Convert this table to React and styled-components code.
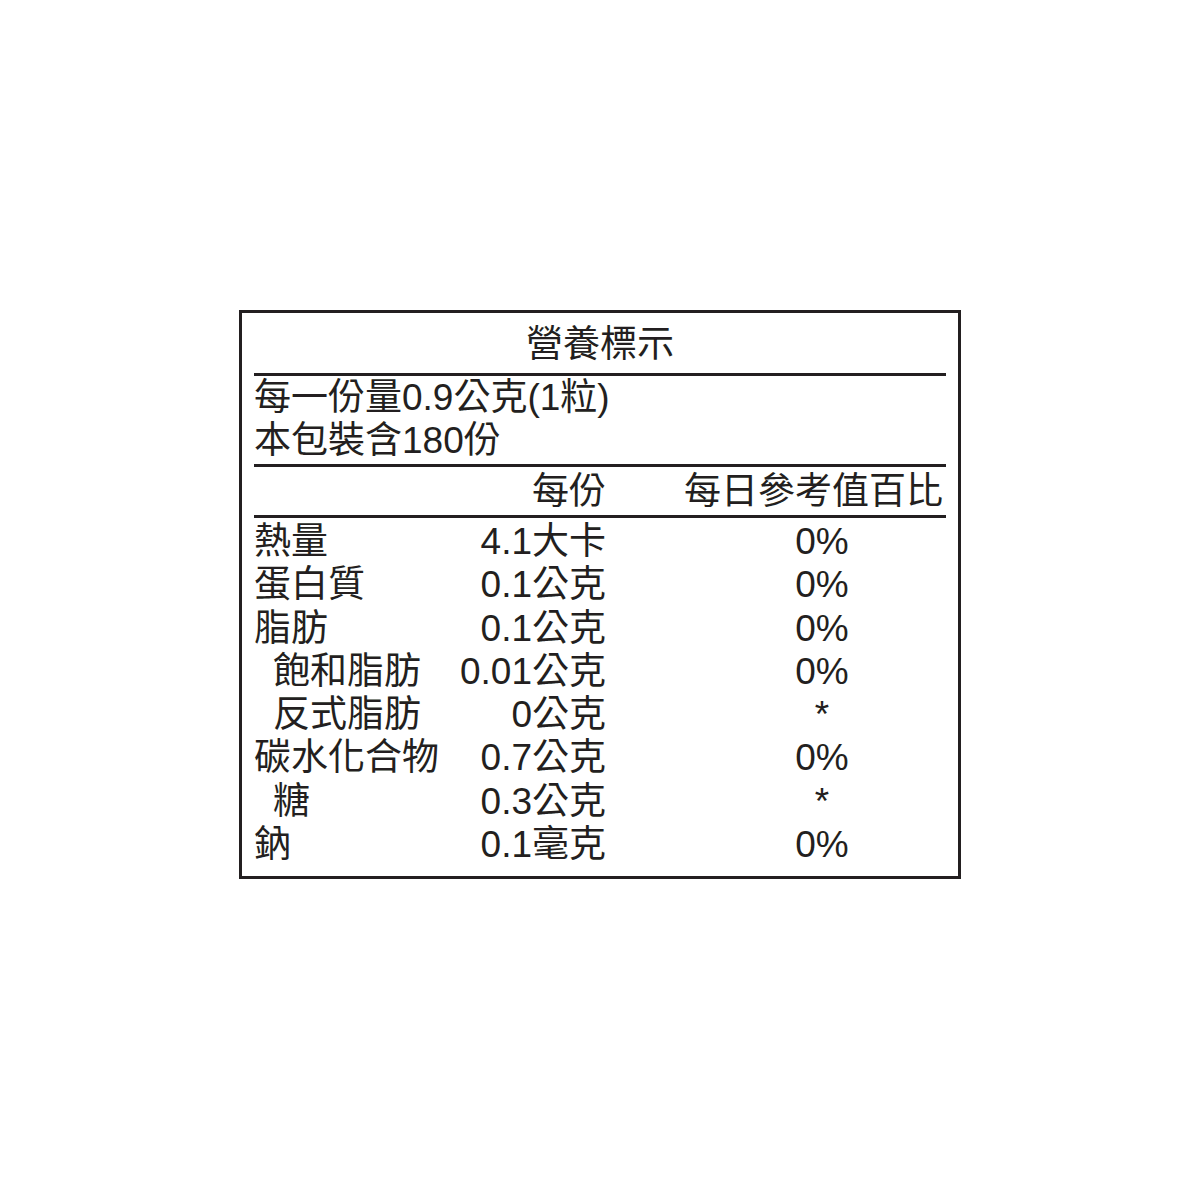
import React from "react";
import styled, { createGlobalStyle } from "styled-components";

const Global = createGlobalStyle`
  html, body { margin: 0; padding: 0; background: #ffffff; }
  body { font-family: "Liberation Sans", "Noto Sans CJK TC", sans-serif; color: #231f20; }
`;

const Page = styled.div`
  width: 1200px;
  height: 1200px;
  box-sizing: border-box;
  padding-top: 310px;
  display: flex;
  justify-content: center;
  align-items: flex-start;
`;

const Label = styled.div`
  width: 722px;
  box-sizing: border-box;
  border: 3px solid #231f20;
  padding: 0 12px 10px 12px;
  font-size: 37px;
  line-height: 43px;
  font-family: "Liberation Sans", "Noto Sans CJK TC", sans-serif;
`;

const Title = styled.div`
  height: 60px;
  line-height: 60px;
  padding-top: 2px;
  box-sizing: border-box;
  text-align: center;
`;

const Rule = styled.div`
  height: 3px;
  background: #231f20;
`;

const Serving = styled.div`
  padding-bottom: 2px;
`;

const Line = styled.div`
  height: 43px;
  white-space: nowrap;
`;

const Grid = styled.div`
  display: grid;
  grid-template-columns: 182px 170px 1fr;
  padding: ${(p) => p.$pad || "0"};
`;

const Cell = styled.div`
  height: ${(p) => p.$h || "43.3px"};
  line-height: ${(p) => p.$h || "43.3px"};
  white-space: nowrap;
  text-align: ${(p) => p.$align || "left"};
  padding-left: ${(p) => p.$pl || "0"};
  padding-right: ${(p) => p.$pr || "0"};
`;

const rows = [
  { name: "熱量", value: "4.1大卡", pct: "0%" },
  { name: "蛋白質", value: "0.1公克", pct: "0%" },
  { name: "脂肪", value: "0.1公克", pct: "0%" },
  { name: "飽和脂肪", value: "0.01公克", pct: "0%", indent: true },
  { name: "反式脂肪", value: "0公克", pct: "*", indent: true },
  { name: "碳水化合物", value: "0.7公克", pct: "0%" },
  { name: "糖", value: "0.3公克", pct: "*", indent: true },
  { name: "鈉", value: "0.1毫克", pct: "0%" },
];

export default function App() {
  return (
    <>
      <Global />
      <Page>
        <Label>
          <Title>營養標示</Title>
          <Rule />
          <Serving>
            <Line>每一份量0.9公克(1粒)</Line>
            <Line>本包裝含180份</Line>
          </Serving>
          <Rule />
          <Grid $pad="3px 0 2px 0">
            <Cell $h="43px" />
            <Cell $h="43px" $align="right">每份</Cell>
            <Cell $h="43px" $align="right" $pr="3px">每日參考值百比</Cell>
          </Grid>
          <Rule />
          <Grid $pad="2px 0 0 0">
            {rows.map((r) => (
              <React.Fragment key={r.name}>
                <Cell $pl={r.indent ? "19px" : "0"}>{r.name}</Cell>
                <Cell $align="right">{r.value}</Cell>
                <Cell $align="center" $pl="92px">{r.pct}</Cell>
              </React.Fragment>
            ))}
          </Grid>
        </Label>
      </Page>
    </>
  );
}
